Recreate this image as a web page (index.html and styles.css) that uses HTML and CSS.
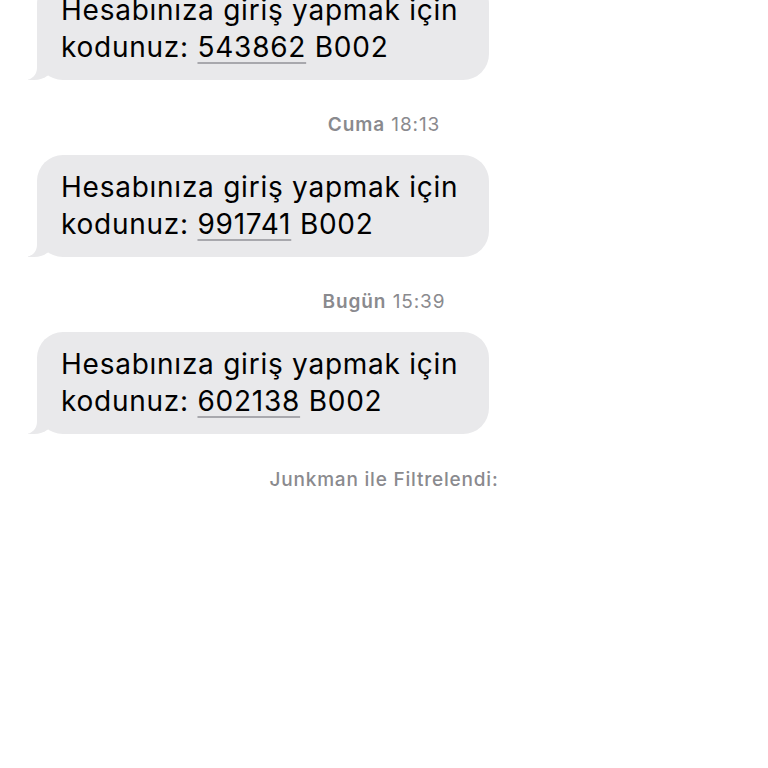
FILE: index.html
```html
<!DOCTYPE html>
<html lang="tr">
<head>
    <meta charset="UTF-8">
    <meta name="viewport" content="width=device-width, initial-scale=1.0">
    <title>Mesajlar</title>
    <link rel="stylesheet" href="styles.css">
</head>
<body>

<div class="thread">
    <div class="bubble first">Hesabınıza giriş yapmak için kodunuz: <span class="code">543862</span> B002</div>

    <div class="stamp"><b>Cuma</b> 18:13</div>
    <div class="bubble">Hesabınıza giriş yapmak için kodunuz: <span class="code">991741</span> B002</div>

    <div class="stamp"><b>Bugün</b> 15:39</div>
    <div class="bubble">Hesabınıza giriş yapmak için kodunuz: <span class="code">602138</span> B002</div>

    <div class="filter-note">Junkman ile Filtrelendi:</div>
</div>

</body>
</html>
```

FILE: styles.css
```css
/* Message thread */
body {
    margin: 0;
    background-color: #fff;
    font-family: Inter, "Noto Sans", sans-serif;
}
.thread {
    display: flex;
    flex-direction: column;
    align-items: flex-start;
    padding: 0 0 0 37px;
}
.bubble {
    position: relative;
    max-width: 452px;
    box-sizing: border-box;
    padding: 14px 26px 14px 24px;
    background-color: #e9e9eb;
    border-radius: 26px;
    font-size: 28px;
    line-height: 37px;
    letter-spacing: 0.75px;
    color: #000;
}
.bubble.first {
    margin-top: -22px;
}
/* tail */
.bubble::before {
    content: "";
    position: absolute;
    left: -9px;
    bottom: 0;
    width: 26px;
    height: 28px;
    background-color: #e9e9eb;
    border-bottom-right-radius: 20px 16px;
}
.bubble::after {
    content: "";
    position: absolute;
    left: -30px;
    bottom: 0;
    width: 30px;
    height: 28px;
    background-color: #fff;
    border-bottom-right-radius: 12px;
}
.code {
    text-decoration: underline;
    text-decoration-color: #a8a8ad;
    text-decoration-thickness: 1.5px;
    text-underline-offset: 5px;
}
.stamp,
.filter-note {
    align-self: stretch;
    margin-left: -37px;
    text-align: center;
    font-size: 19px;
    line-height: 20px;
    color: #8a8a8e;
}
.stamp {
    margin-top: 35px;
    margin-bottom: 20px;
    letter-spacing: 0.9px;
}
.stamp b {
    font-weight: 600;
}
.filter-note {
    margin-top: 36px;
    font-weight: 500;
    letter-spacing: 0.8px;
}
```
